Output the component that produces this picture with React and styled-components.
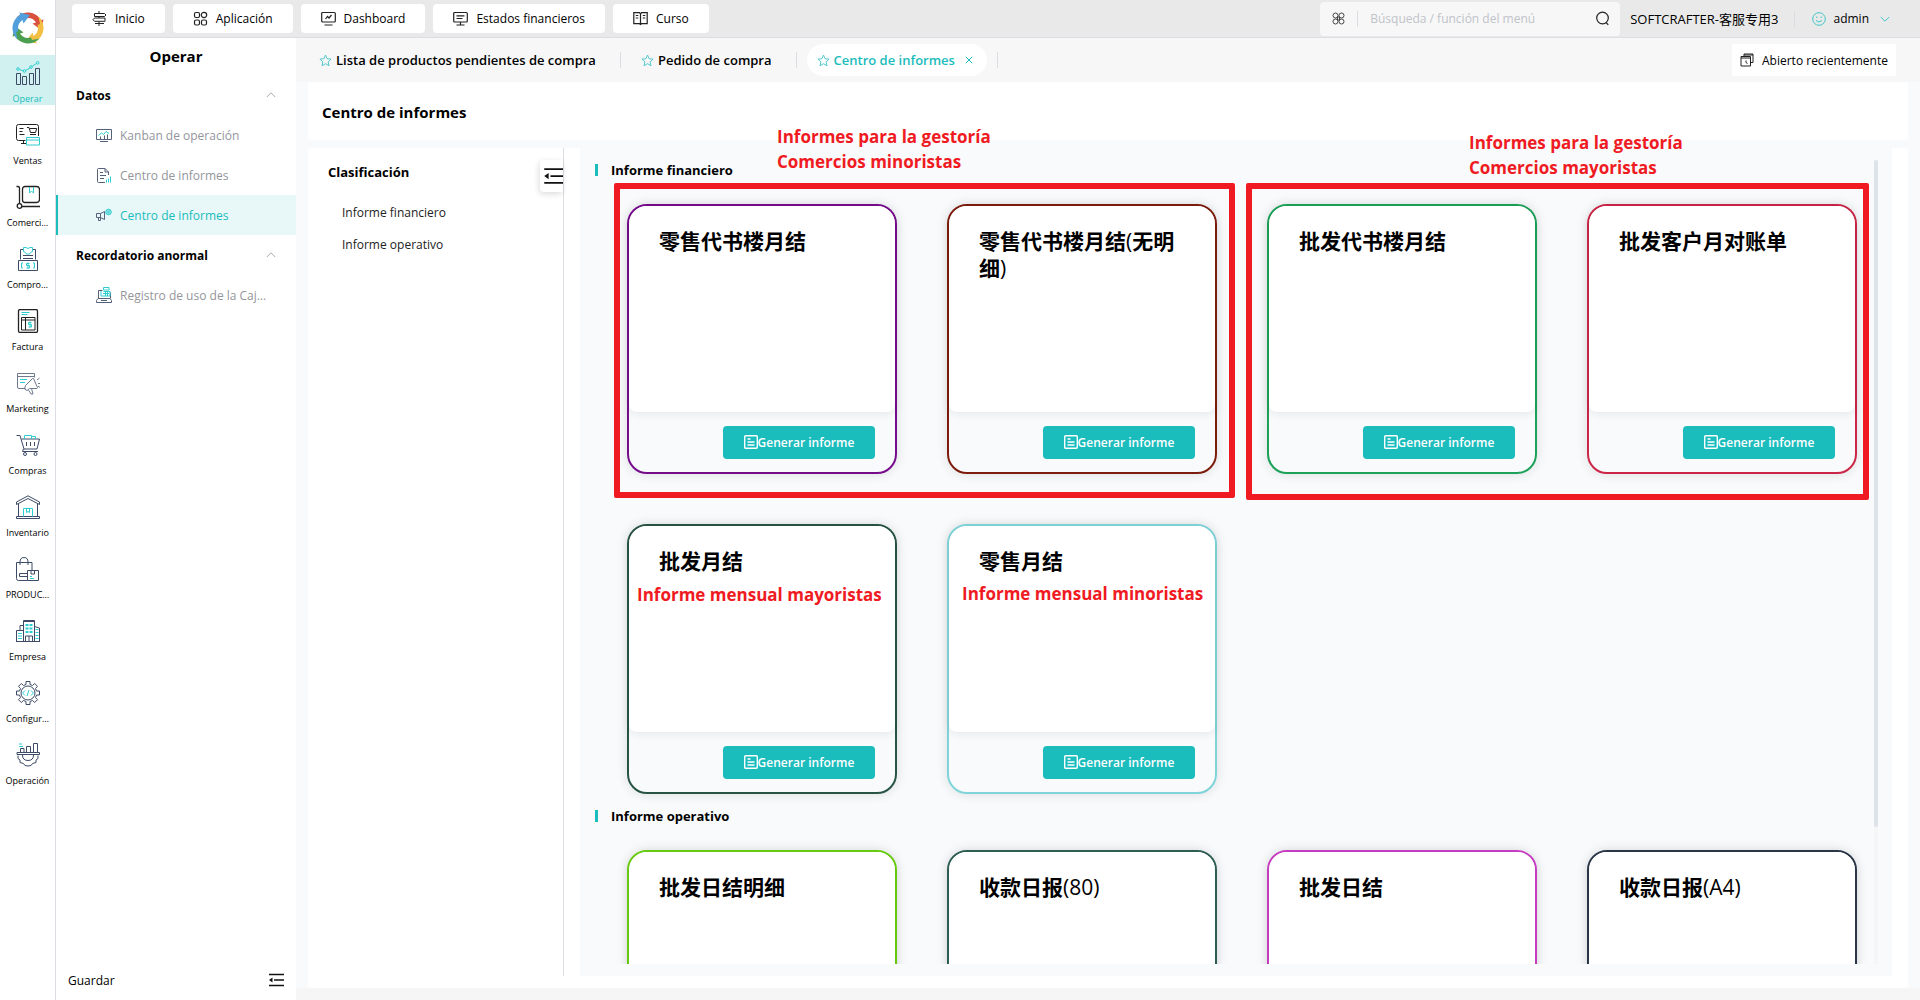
import { useState } from "react";
import styled, { createGlobalStyle, css } from "styled-components";

const TEAL = "#1abcbc";
const NAVY = "#3d4b66";
const AQUA = "#2fcdd0";

const GlobalStyle = createGlobalStyle`
  * {
    box-sizing: border-box;
  }
  body {
    margin: 0;
    background: #f6f6f6;
    color: #000;
    font-family: "Open Sans", "Noto Sans", "Noto Sans CJK SC", sans-serif;
    font-size: 13px;
  }
  button, input {
    font-family: inherit;
    font-size: inherit;
    color: inherit;
  }
  button {
    border: 0;
    padding: 0;
    background: none;
    cursor: pointer;
  }
  h1, h2, h3, p, ul {
    margin: 0;
    padding: 0;
  }
  ul {
    list-style: none;
  }
  svg {
    display: block;
    flex: none;
  }
`;

const Page = styled.div`
  display: flex;
  height: 100vh;
  overflow: hidden;
`;

/* left icon rail */
const Rail = styled.nav`
  flex: none;
  width: 56px;
  background: #fff;
  border-right: 1px solid #dcdde2;
`;
const LogoBox = styled.div`
  height: 55px;
  display: flex;
  align-items: center;
  justify-content: center;
`;
const RailList = styled.ul`
  display: flex;
  flex-direction: column;
  gap: 12px;
`;
const RailItem = styled.button`
  width: 100%;
  height: 50px;
  padding: 6px 2px 0;
  display: flex;
  flex-direction: column;
  align-items: center;
  gap: 6px;
  font-size: 9px;
  line-height: 16px;
  white-space: nowrap;
  ${(props) =>
    props.$active &&
    css`
      background: #d1f1f1;
      color: ${TEAL};
    `}
`;

const Body = styled.div`
  flex: 1;
  min-width: 0;
  display: flex;
  flex-direction: column;
`;

/* top bar */
const TopBar = styled.header`
  flex: none;
  height: 38px;
  padding: 0 24px 0 16px;
  display: flex;
  align-items: center;
  gap: 8px;
  background: #e9e9e9;
  border-bottom: 1px solid #dcdde2;
`;
const TopButton = styled.button`
  height: 29px;
  padding: 0 20px;
  display: flex;
  align-items: center;
  gap: 8px;
  border-radius: 4px;
  background: #fff;
  font-size: 12px;
`;
const Search = styled.label`
  width: 300px;
  height: 34px;
  margin-left: auto;
  padding: 0 10px 0 12px;
  display: flex;
  align-items: center;
  gap: 12px;
  border-radius: 4px;
  background: #f7f7f7;
`;
const SearchInput = styled.input`
  flex: 1;
  min-width: 0;
  border: 0;
  outline: 0;
  padding: 0;
  background: transparent;
  font-size: 12px;
  &::placeholder {
    color: #bfc3ca;
    opacity: 1;
  }
`;
const Divider = styled.span`
  flex: none;
  width: 1px;
  height: 16px;
  background: #dcdde2;
`;
const Account = styled.span`
  margin: 0 8px 0 2px;
  font-size: 13px;
  white-space: nowrap;
`;
const UserButton = styled.button`
  padding-left: 9px;
  display: flex;
  align-items: center;
  gap: 7px;
  font-size: 12px;
  svg:last-child {
    margin: 0 6px 0 4px;
  }
`;

const Row = styled.div`
  flex: 1;
  min-height: 0;
  display: flex;
`;

/* menu beside the rail */
const Side = styled.aside`
  flex: none;
  width: 240px;
  display: flex;
  flex-direction: column;
  background: #fff;
`;
const SideTitle = styled.h2`
  height: 37px;
  font-size: 15px;
  line-height: 37px;
  font-weight: 700;
  text-align: center;
`;
const SideGroup = styled.button`
  width: 100%;
  height: 40px;
  padding: 0 20px;
  display: flex;
  align-items: center;
  justify-content: space-between;
  font-size: 12px;
  font-weight: 700;
`;
const SideItem = styled.a`
  height: 40px;
  padding: 0 24px 0 38px;
  display: flex;
  align-items: center;
  gap: 8px;
  border-left: 2px solid ${(props) => (props.$active ? TEAL : "transparent")};
  background: ${(props) => (props.$active ? "#e8f7f7" : "transparent")};
  color: ${(props) => (props.$active ? TEAL : "#93959b")};
  font-size: 12px;
  text-decoration: none;
  span {
    white-space: nowrap;
    overflow: hidden;
    text-overflow: ellipsis;
  }
`;
const SideFooter = styled.div`
  height: 40px;
  margin-top: auto;
  padding: 0 12px;
  display: flex;
  align-items: center;
  justify-content: space-between;
  font-size: 12px;
`;

const Main = styled.main`
  flex: 1;
  min-width: 0;
  display: flex;
  flex-direction: column;
`;

/* open tabs */
const Tabs = styled.div`
  flex: none;
  height: 44px;
  padding: 0 24px 0 13px;
  display: flex;
  align-items: center;
  background: #f7f7f7;
`;
const Tab = styled.button`
  height: 32px;
  margin-right: 10px;
  padding: 0 14px 0 10px;
  display: flex;
  align-items: center;
  gap: 4px;
  border-radius: 16px;
  background: ${(props) => (props.$active ? "#fff" : "transparent")};
  color: ${(props) => (props.$active ? TEAL : "#000")};
  font-weight: 600;
  white-space: nowrap;
  & + span + & {
    margin-left: 10px;
  }
`;
const CloseMark = styled.span`
  padding-left: 6px;
`;
const Recent = styled.button`
  height: 32px;
  margin-left: auto;
  padding: 0 8px;
  display: flex;
  align-items: center;
  gap: 8px;
  background: #fff;
  font-size: 12px;
`;

/* page content */
const Content = styled.div`
  flex: 1;
  min-height: 0;
  margin-bottom: 12px;
  padding: 0 12px;
  display: flex;
  flex-direction: column;
  gap: 8px;
  background: #f9fafc;
`;
const TitleCard = styled.div`
  flex: none;
  height: 58px;
  padding: 2px 14px 0;
  display: flex;
  align-items: center;
  border-radius: 4px;
  background: #fff;
  h1 {
    font-size: 15px;
    font-weight: 700;
  }
`;
const Panel = styled.div`
  flex: 1;
  min-height: 0;
  padding: 0 16px 12px 0;
  display: flex;
  gap: 16px;
  border-radius: 4px;
  background: #fff;
`;
const Classes = styled.div`
  flex: none;
  width: 256px;
  padding-top: 12px;
  border-right: 1px solid #dcdde2;
`;
const ClassesHead = styled.div`
  height: 32px;
  margin-bottom: 5px;
  padding-left: 20px;
  display: flex;
  justify-content: space-between;
  h2 {
    font-size: 13px;
    line-height: 24px;
    font-weight: 700;
  }
`;
const FoldButton = styled.button`
  width: 23px;
  height: 32px;
  padding-left: 3px;
  overflow: hidden;
  border-radius: 4px 0 0 4px;
  background: #fff;
  box-shadow: -1px 2px 6px rgba(0, 0, 0, 0.14);
`;
const ClassLink = styled.a`
  display: block;
  padding-left: 34px;
  color: #222;
  font-size: 12px;
  line-height: 32px;
  text-decoration: none;
`;
const Reports = styled.div`
  position: relative;
  flex: 1;
  min-width: 0;
  padding: 12px 14px 12px 12px;
  display: flex;
  background: #f9fafc;
`;
const Scroller = styled.div`
  flex: 1;
  min-width: 0;
  overflow-y: auto;
  scrollbar-width: none;
`;
const Track = styled.div`
  flex: none;
  width: 4px;
  background: #f5f6f7;
`;
const Thumb = styled.div`
  height: 83%;
  border-radius: 2px;
  background: #dde3e8;
`;
const SectionTitle = styled.h2`
  height: 20px;
  padding-left: 3px;
  display: flex;
  align-items: center;
  gap: 13px;
  font-size: 13px;
  font-weight: 700;
  &::before {
    content: "";
    width: 3px;
    height: 12px;
    background: ${TEAL};
  }
`;
const Grid = styled.div`
  margin-bottom: 12px;
  padding: 24px 16px 0 35px;
  display: grid;
  grid-template-columns: repeat(auto-fill, 270px);
  gap: 50px;
`;
const Card = styled.article`
  height: 270px;
  display: flex;
  flex-direction: column;
  border: 2px solid ${(props) => props.$color};
  border-radius: 20px;
  box-shadow: 0 0 12px rgba(0, 0, 0, 0.12);
`;
const CardTop = styled.div`
  flex: 1;
  padding: 22px 30px;
  border-radius: 18px 18px 8px 8px;
  background: #fff;
  box-shadow: 0 2px 10px rgba(0, 0, 0, 0.08);
`;
const CardTitle = styled.h3`
  font-size: 21px;
  line-height: 27px;
  font-weight: 700;
  span {
    font-weight: 400;
  }
`;
const CardFoot = styled.div`
  height: 60px;
  padding: 0 20px;
  display: flex;
  align-items: center;
  justify-content: flex-end;
`;
const Generate = styled.button`
  height: 33px;
  min-width: 152px;
  display: flex;
  align-items: center;
  justify-content: center;
  border-radius: 4px;
  background: ${TEAL};
  color: #fff;
  font-size: 12px;
  font-weight: 600;
`;

/* red notes laid over the reports */
const Frame = styled.div`
  position: absolute;
  top: 35px;
  left: ${(props) => props.$left}px;
  width: ${(props) => props.$width}px;
  height: ${(props) => props.$height}px;
  border: 6px solid #ef1a22;
  border-radius: 2px;
  pointer-events: none;
`;
const Note = styled.p`
  position: absolute;
  top: ${(props) => props.$top}px;
  left: ${(props) => props.$left}px;
  color: #ef1a22;
  font-size: 17px;
  line-height: 25px;
  font-weight: 700;
  white-space: pre;
  pointer-events: none;
`;

function Icon({ size = 24, box = 24, color = NAVY, width = 1, children }) {
  return (
    <svg
      width={size}
      height={size}
      viewBox={`0 0 ${box} ${box}`}
      fill="none"
      stroke={color}
      strokeWidth={width}
      aria-hidden="true"
    >
      {children}
    </svg>
  );
}

function Logo() {
  const arrow = "M-11.5 -10.5 A15.5 15.5 0 0 1 13.2 -8 L15.5 -8.5 L13 2 L4.5 -4.5 L8 -5.5 A10 10 0 0 0 -3 -9.5 L-4 -12 Z";
  return (
    <svg width="32" height="32" viewBox="-16 -16 32 32" aria-hidden="true">
      <path d={arrow} fill="#d9503f" />
      <path d={arrow} fill="#f3bf42" transform="rotate(90)" />
      <path d={arrow} fill="#4c9f50" transform="rotate(180)" />
      <path d={arrow} fill="#529fdc" transform="rotate(270)" />
    </svg>
  );
}

const railItems = [
  {
    label: "Operar",
    icon: (
      <>
        <path d="M.5 12.5h4v11h-4zM6.500 15.500h4v8h-4zM13.500 12.500h4v11h-4zM19.500 7.500h4v16h-4z" />
        <g stroke={AQUA}>
          <path d="M3.500 8.500l4 1.500M9.500 9.500l4.500-2.500M16.500 5l4-2.500" />
          <circle cx="2" cy="8" r="1.300" />
          <circle cx="8.500" cy="10" r="1.300" />
          <circle cx="15" cy="6" r="1.300" />
          <circle cx="21.700" cy="1.800" r="1.300" />
        </g>
      </>
    ),
  },
  {
    label: "Ventas",
    icon: (
      <>
        <path stroke="#222" d="M9.500 17.500h-7a2 2 0 0 1-2-2v-12a2 2 0 0 1 2-2h18a2 2 0 0 1 2 2v9.500M3.500 5.500h4M3.500 8.500h3M3.500 11.500h5M7.500 17.500v3M5 20.500h5M11 4.500h2l1.500 5h5l1.200-4h-7M14 11.500h6" />
        <path stroke={AQUA} d="M10.500 14.500h13v7.500h-13zM10.500 17h13" />
      </>
    ),
  },
  {
    label: "Comerci…",
    icon: (
      <>
        <path stroke="#222" strokeWidth="1.300" d="M.5 1.500h1.500q1.500 0 1.500 2v15M6 21.500h18M9 1.500h11.500a3 3 0 0 1 3 3v10a3 3 0 0 1-3 3H9a2.500 2.500 0 0 1-2.500-2.500V4A2.500 2.500 0 0 1 9 1.500z" />
        <circle stroke="#222" strokeWidth="1.300" cx="3.500" cy="21" r="2.300" />
        <path stroke={AQUA} d="M13.500 2v6l2-2 2 2V2" />
      </>
    ),
  },
  {
    label: "Compro…",
    icon: (
      <>
        <path d="M4.500 12.500v-10H8M19.500 12.500v-10H16M2.500 13.500h19v10h-19zM7 8.500h10M7 11.500h10" />
        <path stroke={AQUA} d="M7.500.5v4l2 1 1 1.500h3l1-1.500 2-1v-4h-2.500q-2 2-4 0zM7 16h-1.500v5H7M17 16h1.500v5H17M13.500 16.500h-3v2h3v2.500h-3M12 15.500v6.500" />
      </>
    ),
  },
  {
    label: "Factura",
    icon: (
      <>
        <rect x="2.500" y=".5" width="19" height="23" rx="1.500" stroke="#222" strokeWidth="1.300" />
        <path stroke="#222" d="M5.500 8.500h13.500v12.500H5.500zM5.500 11h13.500M9.500 8.500v12.500" />
        <path stroke={AQUA} d="M5.500 3.500h8M5.500 5.500h6M15.500 13.500h-3v2h3v2.500h-3M14 12.500v6" />
      </>
    ),
  },
  {
    label: "Marketing",
    icon: (
      <>
        <path stroke="#6f7a8f" d="M9.500 17.500H3a1.500 1.500 0 0 1-1.500-1.500V2.500h17v4M1.500 5.500h17M9.500 14.500l7-7 1 0 4 9-.5 1-7.500 0-2.500 2-2.500-1.500zM12.500 19l2.500 4h2l-1.500-5.500M21 9l2.500-2M22 12.500h2M22 15l2 1.500" />
        <path stroke={AQUA} d="M4 8.500h7M4 11.500h5" />
      </>
    ),
  },
  {
    label: "Compras",
    icon: (
      <>
        <path d="M.5 2.500h3.500l4 13.500h13l2.500-10H5.500M10.500 9v4M14.500 9v4M18.500 9v4M7.500 16l-1 2.500h15.500" />
        <circle cx="9" cy="21" r="1.500" />
        <circle cx="19.500" cy="21" r="1.500" />
        <path stroke={AQUA} d="M8.500 6V2.500h7V6M15.500 3.500h4V6" />
      </>
    ),
  },
  {
    label: "Inventario",
    icon: (
      <>
        <path d="M.5 7L12 .8 23.500 7v2.500L12 3.500.5 9.500zM2.500 9v12.500M21.500 9v12.500M.5 21.500h23v2H.500z" />
        <path stroke={AQUA} d="M7.500 21.500v-8h9v8M10.500 13.500v4l1.500-1 1.500 1v-4" />
      </>
    ),
  },
  {
    label: "PRODUC…",
    icon: (
      <>
        <path d="M11.500 23.500h-9a2 2 0 0 1-2-2v-16h15.500v7.500M4 8V5q0-4.500 4-4.500T12 5v3M11.500 16.500h-8v3h8M11.500 13.500h11v10h-11zM15 13.500v3.500h3.500v-3.500" />
        <path stroke={AQUA} d="M14 19.500h2M14 21.500h4" />
      </>
    ),
  },
  {
    label: "Empresa",
    icon: (
      <>
        <path d="M7.500 22.500v-21h11v21M7.500 2.500h11M.5 22.500v-11h6.500M4 11.500v-5h3.500M18.500 7.500l5 1.500v13.500M0 22.500h24M9.500 22v-5h7v5M13 17v5" />
        <path stroke={AQUA} strokeWidth="2" strokeDasharray="3 1" d="M9.500 6h7M9.500 9.500h7M9.500 13h7" />
        <path stroke={AQUA} d="M2 14.500h4M2 17h4M2 19.500h4M19.500 10.500h3M19.500 13.500h3M19.500 16.500h3M19.500 19.500h3" />
      </>
    ),
  },
  {
    label: "Configur…",
    icon: (
      <>
        <path d="M10 .5h4v3l2.500 1 2.200-2 2.800 2.800-2 2.200 1 2.500h3v4h-3l-1 2.500 2 2.200-2.800 2.800-2.200-2-2.500 1v3h-4v-3l-2.500-1-2.200 2-2.800-2.800 2-2.200-1-2.500h-3v-4h3l1-2.500-2-2.200 2.800-2.800 2.200 2 2.500-1z" />
        <circle cx="12" cy="12" r="7" />
        <path stroke={AQUA} d="M9 9.500L6.500 12 9 14.500M15 9.500l2.500 2.500-2.500 2.500M13 9l-2 6" />
      </>
    ),
  },
  {
    label: "Operación",
    icon: (
      <>
        <path d="M4.500 9.500v-4h3.500v4M10.500 9.500v-6h4v6M17.500 9.500v-9h4v9M1 9.500h22.500v2H1zM2 12.500l0 3 2 1.500 0 2.500 3.500 1 1.500 2 3 .5 3-.5 1.500-2 3.500-1v-2.500l2-1.500v-3M6.500 12q0 5.500 5.500 5.500t5.500-5.500" />
        <path stroke={AQUA} d="M3 1h3M3 3.500h4" />
      </>
    ),
  },
];

const topItems = [
  {
    label: "Inicio",
    icon: <path strokeWidth="1" d="M7 0v2M7 5.500v1.500M7 10.500v1.500M7 13v2M2.500 2.500h10l1.500 1.500-1.500 1.500h-10zM13 7H2.500L1 8.700l1.500 1.600H13zM3 12.500h9" />,
  },
  {
    label: "Aplicación",
    icon: (
      <>
        <rect x="1.500" y="1.500" width="5" height="5" rx="1.500" />
        <circle cx="11" cy="4" r="2.700" />
        <rect x="1.500" y="9" width="5" height="5" rx="1.500" />
        <rect x="8.500" y="9" width="5" height="5" rx="1.500" />
      </>
    ),
  },
  {
    label: "Dashboard",
    icon: (
      <>
        <rect x=".7" y="1.500" width="13.600" height="9.500" rx="1" />
        <path d="M3.500 14h8M4.500 8l2-2.500 1.500 1.500 2.500-3" />
      </>
    ),
  },
  {
    label: "Estados financieros",
    icon: (
      <>
        <rect x=".7" y="1.500" width="13.600" height="9.500" rx="1" />
        <path d="M3.500 14h8M7.500 11v3M3.500 4.800h8M3.500 7.500h6" />
      </>
    ),
  },
  {
    label: "Curso",
    icon: <path d="M7.500 3L6.500 1.700H.8v11h5.700l1 .8 1-.8h5.700v-11H8.500zM7.500 3v10M2.800 4.500h2.500M2.800 7h2.500M9.800 4.500h2.500M9.800 7h2.500" />,
  },
];

const sideGroups = [
  {
    title: "Datos",
    items: [
      {
        label: "Kanban de operación",
        icon: (
          <>
            <path d="M.5 2.500h15v10H.5zM4 14.500h8M4.500 12V9.500M8.500 12V8.500M11.500 12V7.500" />
            <path stroke={AQUA} d="M2.500 8.500l3-2.500 2 1.500 2.500-3 3 2" />
          </>
        ),
      },
      {
        label: "Centro de informes",
        icon: (
          <>
            <path d="M9 15.500H2.500a1 1 0 0 1-1-1V2.500a1 1 0 0 1 1-1H9l3.500 3.500v3M9 1.500V5h3.500M4 5.500h3M4 8.500h6M4 11.500h4" />
            <path stroke={AQUA} d="M10.500 15.500v-3M12.500 15.500v-4M14.500 15.500v-6" />
          </>
        ),
      },
      {
        label: "Centro de informes",
        active: true,
        icon: (
          <>
            <path d="M.5 6.500h4l4-2v8l-4-2h-4zM2.500 10.500v3h2v-3M4.500 6.500v4" />
            <circle cx="12.500" cy="5" r="2.800" fill="#a5e6e6" stroke={AQUA} />
            <path stroke={AQUA} d="M11.500 4h2l-2 2h2" />
          </>
        ),
      },
    ],
  },
  {
    title: "Recordatorio anormal",
    items: [
      {
        label: "Registro de uso de la Caja registradora",
        icon: (
          <>
            <path d="M2.500 11.500v-8h4M14.500 11.500v-6M.5 13.500l1.500-2h12l1.500 2v2H.500zM5 13.500h6" />
            <path stroke={AQUA} d="M7.500 3V.5h5.500V3zM5 4v5h9V4.500H7.500M7 6.500h6M9.500 4.500V9M11.500 4.500V9" />
          </>
        ),
      },
    ],
  },
];

const tabs = [
  { label: "Lista de productos pendientes de compra" },
  { label: "Pedido de compra" },
  { label: "Centro de informes", active: true },
];

const sections = [
  {
    title: "Informe financiero",
    cards: [
      { title: "零售代书楼月结", color: "#760b8c" },
      { title: "零售代书楼月结(无明细)", color: "#7d1c0c" },
      { title: "批发代书楼月结", color: "#1ba158" },
      { title: "批发客户月对账单", color: "#cb2547" },
      { title: "批发月结", color: "#275443" },
      { title: "零售月结", color: "#7fd4da" },
    ],
  },
  {
    title: "Informe operativo",
    cards: [
      { title: "批发日结明细", color: "#69cf10" },
      { title: "收款日报(80)", color: "#2f6055" },
      { title: "批发日结", color: "#cb3ec5" },
      { title: "收款日报(A4)", color: "#2c3849" },
    ],
  },
];

// latin runs inside the titles are set in the regular weight
function mixedTitle(title) {
  return title
    .split(/([\x20-\x7e]+)/)
    .map((part, i) => (i % 2 ? <span key={i}>{part}</span> : part));
}

function Chevron({ down, color = "#a8abb2" }) {
  return (
    <Icon size={10} box={10} color={color}>
      <path d={down ? "M.8 3L5 7.200 9.200 3" : "M.8 7L5 2.800 9.200 7"} />
    </Icon>
  );
}

function FoldIcon({ size = 16 }) {
  return (
    <Icon size={size} box={16} color="#111" width={1.4}>
      <path d="M1 2.500h15M6 8h10M1 13.500h15" />
      <path d="M4.500 5.500v5L1 8z" fill="#111" stroke="none" />
    </Icon>
  );
}

function Star() {
  return (
    <Icon size={13} box={13} color="#55c9cb">
      <path d="M6.500 1l1.600 3.700 4 .4-3 2.700.9 4-3.500-2.100L3 11.800l.9-4-3-2.700 4-.4z" />
    </Icon>
  );
}

function Header() {
  const [query, setQuery] = useState("");
  return (
    <TopBar>
      {topItems.map((item) => (
        <TopButton key={item.label}>
          <Icon size={15} box={15} color="#222" width={1.2}>
            {item.icon}
          </Icon>
          {item.label}
        </TopButton>
      ))}
      <Search>
        <Icon size={13} box={13} color="#444">
          <circle cx="3.500" cy="3.500" r="2.500" />
          <circle cx="9.500" cy="3.500" r="2.500" />
          <circle cx="3.500" cy="9.500" r="2.500" />
          <circle cx="9.500" cy="9.500" r="2.500" />
          <path d="M5.500 5h2v3h-2z" />
        </Icon>
        <Divider />
        <SearchInput
          aria-label="Búsqueda"
          placeholder="Búsqueda / función del menú"
          value={query}
          onChange={(e) => setQuery(e.target.value)}
        />
        <Icon size={15} box={15} color="#222" width={1.2}>
          <circle cx="7.500" cy="7" r="5.800" />
          <path d="M11 11.500l2.300 2.300" />
        </Icon>
      </Search>
      <Account>SOFTCRAFTER-客服专用3</Account>
      <Divider />
      <UserButton>
        <Icon size={14} box={14} color="#3fc6c8">
          <circle cx="7" cy="7" r="6.300" />
          <path d="M4 8.500q3 3 6 0M4.800 4.500v1.500M9.200 4.500v1.500" />
        </Icon>
        admin
        <Chevron down color="#3fc6c8" />
      </UserButton>
    </TopBar>
  );
}

function SideMenu() {
  return (
    <Side>
      <SideTitle>Operar</SideTitle>
      {sideGroups.map((group) => (
        <div key={group.title}>
          <SideGroup>
            {group.title}
            <Chevron />
          </SideGroup>
          {group.items.map((item, i) => (
            <SideItem key={i} href="#" $active={item.active}>
              <Icon size={16} box={16} color="#56627a">
                {item.icon}
              </Icon>
              <span>{item.label}</span>
            </SideItem>
          ))}
        </div>
      ))}
      <SideFooter>
        Guardar
        <button aria-label="Plegar menú">
          <FoldIcon />
        </button>
      </SideFooter>
    </Side>
  );
}

function TabBar() {
  return (
    <Tabs>
      {tabs.map((tab) => [
        <Tab key={tab.label} $active={tab.active}>
          <Star />
          {tab.label}
          {tab.active && (
            <CloseMark>
              <Icon size={8} box={8} color={TEAL}>
                <path d="M.8.800l6.400 6.400M7.200.800L.800 7.200" />
              </Icon>
            </CloseMark>
          )}
        </Tab>,
        <Divider key={tab.label + "-end"} />,
      ])}
      <Recent>
        <Icon size={14} box={14} color="#222">
          <path d="M4 3.500V1h9v8.500h-2.500M4 2h9M1 3.500h9.500v9.500H1zM1 5h9.500M6 7.500v2l1.500 1" />
        </Icon>
        Abierto recientemente
      </Recent>
    </Tabs>
  );
}

function ReportCard({ title, color }) {
  return (
    <Card $color={color}>
      <CardTop>
        <CardTitle>{mixedTitle(title)}</CardTitle>
      </CardTop>
      <CardFoot>
        <Generate>
          <Icon size={14} box={14} color="#fff" width={1.4}>
            <rect x=".7" y=".7" width="12.600" height="12.600" rx="1" />
            <path d="M3.500 4h3M3.500 7h7M3.500 10h7" />
          </Icon>
          Generar informe
        </Generate>
      </CardFoot>
    </Card>
  );
}

export default function App() {
  return (
    <Page>
      <GlobalStyle />
      <Rail>
        <LogoBox>
          <Logo />
        </LogoBox>
        <RailList>
          {railItems.map((item, i) => (
            <li key={item.label}>
              <RailItem $active={i === 0}>
                <Icon>{item.icon}</Icon>
                {item.label}
              </RailItem>
            </li>
          ))}
        </RailList>
      </Rail>
      <Body>
        <Header />
        <Row>
          <SideMenu />
          <Main>
            <TabBar />
            <Content>
              <TitleCard>
                <h1>Centro de informes</h1>
              </TitleCard>
              <Panel>
                <Classes>
                  <ClassesHead>
                    <h2>Clasificación</h2>
                    <FoldButton aria-label="Plegar clasificación">
                      <FoldIcon size={20} />
                    </FoldButton>
                  </ClassesHead>
                  {sections.map((section) => (
                    <ClassLink key={section.title} href="#">
                      {section.title}
                    </ClassLink>
                  ))}
                </Classes>
                <Reports>
                  <Scroller>
                    {sections.map((section) => (
                      <section key={section.title}>
                        <SectionTitle>{section.title}</SectionTitle>
                        <Grid>
                          {section.cards.map((card) => (
                            <ReportCard key={card.title} {...card} />
                          ))}
                        </Grid>
                      </section>
                    ))}
                  </Scroller>
                  <Track>
                    <Thumb />
                  </Track>
                  <Frame $left={34} $width={621} $height={315} />
                  <Frame $left={666} $width={623} $height={317} />
                  <Note $top={-24} $left={197}>
                    {"Informes para la gestoría\nComercios minoristas"}
                  </Note>
                  <Note $top={-18} $left={889}>
                    {"Informes para la gestoría\nComercios mayoristas"}
                  </Note>
                  <Note $top={434} $left={57}>
                    Informe mensual mayoristas
                  </Note>
                  <Note $top={433} $left={382}>
                    Informe mensual minoristas
                  </Note>
                </Reports>
              </Panel>
            </Content>
          </Main>
        </Row>
      </Body>
    </Page>
  );
}
